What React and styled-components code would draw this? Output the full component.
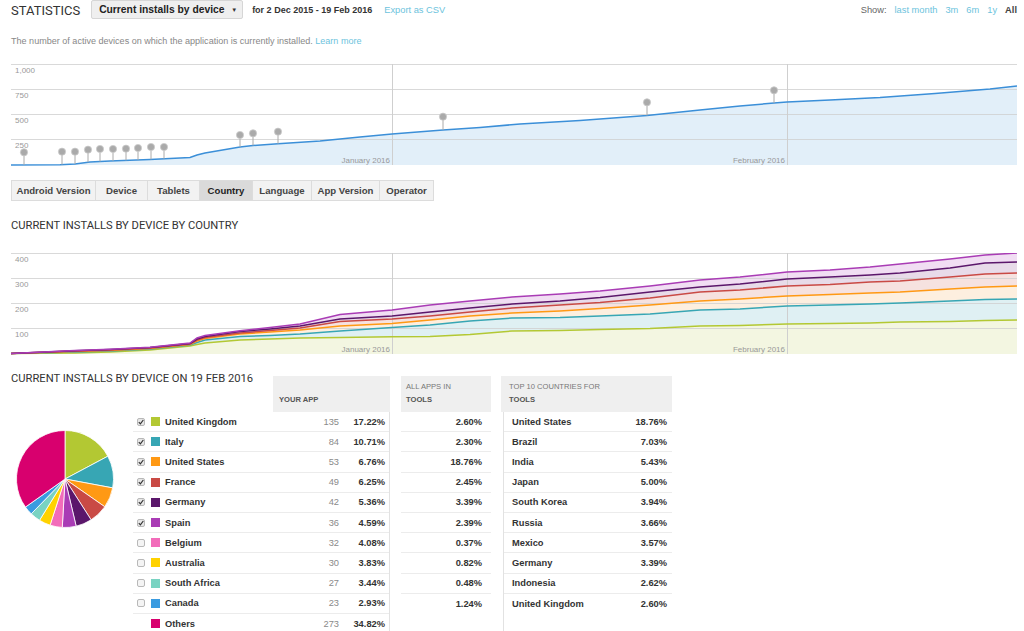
import React from 'react';
import styled, { createGlobalStyle } from 'styled-components';

const GlobalStyle = createGlobalStyle`
  body {
    margin: 0;
    background: #fff;
    font-family: "Liberation Sans", Arial, sans-serif;
    color: #333;
  }
`;

const Page = styled.div`
  width: 1024px;
  height: 631px;
  overflow: hidden;
`;

// Top bar with title, metric picker and range links
const Header = styled.div`
  display: flex;
  align-items: center;
  height: 20px;
  padding: 0 7px 0 11px;
`;

const PageTitle = styled.div`
  font-family: Roboto, sans-serif;
  font-size: 13px;
  color: #333;
  margin-right: 11px;
`;

const Picker = styled.div`
  display: flex;
  align-items: center;
  justify-content: space-between;
  box-sizing: border-box;
  width: 152px;
  height: 19px;
  margin-top: -1px;
  padding: 0 5px 0 7px;
  background: #efefef;
  border: 1px solid #d6d6d6;
  border-radius: 2px;
  font-size: 10.3px;
  font-weight: bold;
  color: #222;
`;

const Caret = styled.span`
  font-size: 6px;
  color: #333;
`;

const Range = styled.div`
  margin-left: 9px;
  font-size: 9px;
  font-weight: bold;
  color: #333;
`;

const Link = styled.a`
  color: #6cc3dd;
  text-decoration: none;
  font-weight: ${p => (p.$active ? 'bold' : 'normal')};
  ${p => p.$active && 'color: #444;'}
`;

const ExportLink = styled(Link)`
  margin-left: 12px;
  font-size: 9.3px;
`;

const ShowGroup = styled.div`
  margin-left: auto;
  display: flex;
  gap: 8px;
  font-size: 9.3px;
  color: #666;
`;

const Description = styled.div`
  margin: 15px 0 0 11px;
  height: 12px;
  line-height: 12px;
  font-size: 9.05px;
  color: #888;
`;

// Chart frame
const ChartBox = styled.div`
  margin: ${p => p.$top}px 7px 0 11px;
  height: 102px;
  svg {
    display: block;
  }
`;

const Tabs = styled.div`
  display: flex;
  margin: 14px 0 0 11px;
`;

const Tab = styled.div`
  width: ${p => p.$w}px;
  height: 21px;
  box-sizing: border-box;
  display: flex;
  align-items: center;
  justify-content: center;
  border: 1px solid #dcdcdc;
  border-left: ${p => (p.$first ? '1px solid #dcdcdc' : 'none')};
  background: ${p => (p.$active ? '#dadada' : '#f2f2f2')};
  font-size: 9.6px;
  font-weight: bold;
  color: ${p => (p.$active ? '#222' : '#444')};
`;

const SectionTitle = styled.div`
  font-family: Roboto, sans-serif;
  font-size: 11.2px;
  color: #333;
  margin: ${p => p.$top}px 0 0 11px;
  line-height: 14px;
`;

// Bottom breakdown grid
const Breakdown = styled.div`
  display: grid;
  grid-template-columns: 122px 140px 117px 11px 90px 10px 171px;
  grid-template-rows: 36px auto;
  margin: 21px 0 0 11px;
`;

const GridTitle = styled.div`
  grid-column: 1 / 3;
  grid-row: 1;
  font-family: Roboto, sans-serif;
  font-size: 11.2px;
  line-height: 14px;
  margin-top: -4px;
  color: #333;
`;

const HeadCell = styled.div`
  grid-column: ${p => p.$col};
  grid-row: 1;
  background: #efefef;
  padding: 4px 0 0 ${p => p.$pad}px;
  font-size: 7.6px;
  line-height: 13px;
  color: #777;
  text-transform: uppercase;
  b {
    color: #555;
  }
`;

const PieCell = styled.div`
  grid-column: 1;
  grid-row: 2;
  padding: 18px 0 0 5px;
`;

const Body = styled.div`
  grid-column: ${p => p.$col};
  grid-row: 2;
  ${p => p.$rule && 'border-right: 1px solid #e2e2e2;'}
  ${p => p.$left && 'margin-left: 2px; border-left: 1px solid #e2e2e2;'}
`;

const Row = styled.div`
  display: flex;
  align-items: center;
  box-sizing: border-box;
  height: 20.2px;
  border-bottom: ${p => (p.$last ? 'none' : '1px solid #ececec')};
  padding: ${p => p.$pad || '0 4px 0 4px'};
  font-size: 9.3px;
  font-weight: bold;
  color: #333;
`;

const Check = styled.span`
  width: 8px;
  height: 8px;
  box-sizing: border-box;
  border: 1px solid #b8b8b8;
  border-radius: 2px;
  background: ${p => (p.$on ? '#e6e6e6' : '#f4f4f4')};
  display: flex;
  align-items: center;
  justify-content: center;
  visibility: ${p => (p.$hidden ? 'hidden' : 'visible')};
`;

const Swatch = styled.span`
  width: 9px;
  height: 9px;
  margin-left: 6px;
  background: ${p => p.$color};
`;

const Name = styled.span`
  flex: 1;
  margin-left: 5px;
`;

const Count = styled.span`
  font-weight: normal;
  color: #8a8a8a;
`;

const Pct = styled.span`
  width: 46px;
  text-align: right;
`;

const Value = styled.span`
  margin-left: auto;
`;

const COUNTRIES = [
  { name: 'United Kingdom', color: '#b3c833', count: 135, pct: 17.22, all: '2.60%', checked: true },
  { name: 'Italy', color: '#37a6b4', count: 84, pct: 10.71, all: '2.30%', checked: true },
  { name: 'United States', color: '#ff9914', count: 53, pct: 6.76, all: '18.76%', checked: true },
  { name: 'France', color: '#c94a45', count: 49, pct: 6.25, all: '2.45%', checked: true },
  { name: 'Germany', color: '#5b176b', count: 42, pct: 5.36, all: '3.39%', checked: true },
  { name: 'Spain', color: '#a93cb5', count: 36, pct: 4.59, all: '2.39%', checked: true },
  { name: 'Belgium', color: '#f26cba', count: 32, pct: 4.08, all: '0.37%' },
  { name: 'Australia', color: '#ffd200', count: 30, pct: 3.83, all: '0.82%' },
  { name: 'South Africa', color: '#79d3c2', count: 27, pct: 3.44, all: '0.48%' },
  { name: 'Canada', color: '#3a9be0', count: 23, pct: 2.93, all: '1.24%' },
  { name: 'Others', color: '#d8006e', count: 273, pct: 34.82, others: true },
];

const TOP10 = [
  ['United States', '18.76%'],
  ['Brazil', '7.03%'],
  ['India', '5.43%'],
  ['Japan', '5.00%'],
  ['South Korea', '3.94%'],
  ['Russia', '3.66%'],
  ['Mexico', '3.57%'],
  ['Germany', '3.39%'],
  ['Indonesia', '2.62%'],
  ['United Kingdom', '2.60%'],
];

const TABS = [
  ['Android Version', 85],
  ['Device', 52],
  ['Tablets', 52],
  ['Country', 53],
  ['Language', 59],
  ['App Version', 68],
  ['Operator', 54],
];

// global x/y -> chart local coordinates
const CX = 11;

const linePath = (xs, ys, top) =>
  xs.map((x, i) => `${i ? 'L' : 'M'}${(x - CX).toFixed(1)},${(ys[i] - top).toFixed(1)}`).join(' ');

const areaPath = (xs, ys, top) =>
  `${linePath(xs, ys, top)} L${xs[xs.length - 1] - CX},101 L${xs[0] - CX},101 Z`;

const interp = (xs, ys, x) => {
  for (let i = 1; i < xs.length; i++) {
    if (x <= xs[i]) {
      const t = (x - xs[i - 1]) / (xs[i] - xs[i - 1]);
      return ys[i - 1] + t * (ys[i] - ys[i - 1]);
    }
  }
  return ys[ys.length - 1];
};

const Grid = ({ labels }) => (
  <g>
    {[0, 25, 50, 75].map((y, i) => (
      <g key={y}>
        <line x1="0" x2="1006" y1={y + 0.5} y2={y + 0.5} stroke="#cfcfcf" strokeOpacity="0.8" />
        <text x="4" y={y + 9} fontSize="8" fill="#999" fontFamily="Liberation Sans, Arial, sans-serif">
          {labels[i]}
        </text>
      </g>
    ))}
    {[[381, 'January 2016'], [776, 'February 2016']].map(([x, t]) => (
      <g key={t}>
        <line x1={x + 0.5} x2={x + 0.5} y1="0" y2="101" stroke="#cfcfcf" />
        <text x={x - 2} y="99" fontSize="8" fill="#999" textAnchor="end" fontFamily="Liberation Sans, Arial, sans-serif">
          {t}
        </text>
      </g>
    ))}
  </g>
);

const XS1 = [11, 60, 75, 90, 110, 150, 190, 197, 205, 240, 253, 278, 320, 360, 392, 443, 480, 520, 580, 620, 647, 700, 740, 774, 787, 830, 880, 935, 990, 1017];
const YS1 = [165, 164.7, 164, 162, 161, 159.5, 157.5, 155, 153, 147, 145.5, 143.8, 141, 137, 134, 130, 127.5, 124, 120.5, 117.5, 115.5, 110, 106, 103, 102, 100, 97.5, 93.5, 89, 86];
const PINS = [[24, 152.3], [62, 151.7], [75, 151.7], [88, 149.7], [100, 149], [113, 149], [126, 148.7], [138, 148], [151, 147], [164, 147], [240, 135], [253, 133.3], [278, 131.7], [443, 116.7], [647, 102.3], [774, 90.3]];

const InstallsChart = () => {
  const top = 64;
  return (
    <svg width="1006" height="102" viewBox="0 0 1006 102">
      <path d={areaPath(XS1, YS1, top)} fill="#e2eff9" />
      <Grid labels={['1,000', '750', '500', '250']} />
      <path d={linePath(XS1, YS1, top)} fill="none" stroke="#3b8fd8" strokeWidth="1.5" />
      {PINS.map(([x, y]) => (
        <g key={x}>
          <line x1={x - CX} x2={x - CX} y1={y - top + 3} y2={interp(XS1, YS1, x) - top} stroke="#aaa" />
          <circle cx={x - CX} cy={y - top} r="3.6" fill="#aaa" stroke="#ccc" strokeWidth="0.8" />
        </g>
      ))}
    </svg>
  );
};

const XS2 = [11, 75, 110, 150, 190, 197, 205, 240, 270, 300, 340, 392, 430, 470, 512, 560, 600, 650, 700, 740, 787, 830, 870, 900, 950, 985, 1017];
const SERIES = [
  { color: '#a93cb5', fill: '#f1def3', ys: [354.5, 351.5, 350.2, 348.2, 344, 339, 336.5, 331.7, 328.5, 325, 315.5, 311, 306, 302, 298, 295, 292, 287, 281, 278, 273, 271, 268, 265, 260, 256, 254] },
  { color: '#5b176b', fill: '#e8dbe9', ys: [354.5, 351.8, 350.6, 348.6, 344.5, 340, 337.5, 332.5, 330, 327, 320, 317, 313, 309, 305, 302, 298.5, 293, 288, 285, 280, 278, 276, 274, 269, 264, 263] },
  { color: '#c94a45', fill: '#f6e2e0', ys: [354.5, 352, 351, 349, 345, 341, 338.5, 334, 331.5, 329, 322.5, 320, 317, 313, 309, 306, 303.5, 299, 293, 291, 287, 285.5, 283, 282, 278, 275, 274] },
  { color: '#ff9914', fill: '#fdefdf', ys: [354.5, 352.5, 351.5, 349.5, 345.5, 342, 339.5, 335, 333, 331, 327, 324.5, 321, 317, 314, 312, 309.5, 306, 302, 300, 297, 295.5, 294, 293, 290, 288, 287] },
  { color: '#37a6b4', fill: '#dff0f3', ys: [354.5, 353, 352, 350, 346, 343.5, 341, 337.5, 336.5, 335, 332, 328.5, 326, 322, 319, 318.5, 317, 315, 311, 310, 307, 306, 305, 304, 302, 300.5, 300] },
  { color: '#b3c833', fill: '#f3f6e1', ys: [354.5, 354, 353, 351, 347, 345.5, 344, 341, 340, 339, 338.5, 337.7, 337.5, 335.5, 332, 331.5, 330.5, 329.5, 327, 326.5, 325, 324.5, 324, 323, 322.5, 321.5, 321] },
];

const CountryChart = () => {
  const top = 254;
  return (
    <svg width="1006" height="102" viewBox="0 0 1006 102">
      {SERIES.map(s => (
        <path key={s.color} d={areaPath(XS2, s.ys, top)} fill={s.fill} />
      ))}
      <Grid labels={['400', '300', '200', '100']} />
      {[...SERIES].reverse().map(s => (
        <path key={s.color} d={linePath(XS2, s.ys, top)} fill="none" stroke={s.color} strokeWidth="1.5" />
      ))}
    </svg>
  );
};

const Pie = () => {
  const r = 48.5;
  const c = 49;
  let angle = -Math.PI / 2;
  const total = COUNTRIES.reduce((a, s) => a + s.pct, 0);
  return (
    <svg width="98" height="98" viewBox="0 0 98 98">
      {COUNTRIES.map(s => {
        const a0 = angle;
        const a1 = angle + (s.pct / total) * Math.PI * 2;
        angle = a1;
        const large = a1 - a0 > Math.PI ? 1 : 0;
        const d = `M${c},${c} L${c + r * Math.cos(a0)},${c + r * Math.sin(a0)} A${r},${r} 0 ${large} 1 ${c + r * Math.cos(a1)},${c + r * Math.sin(a1)} Z`;
        return <path key={s.name} d={d} fill={s.color} stroke="#fff" strokeWidth="0.8" />;
      })}
    </svg>
  );
};

const Tick = () => (
  <svg width="6" height="6" viewBox="0 0 6 6">
    <path d="M0.8,3.2 L2.4,4.8 L5.3,1" fill="none" stroke="#333" strokeWidth="1.2" />
  </svg>
);

const App = () => (
  <Page>
    <GlobalStyle />
    <Header>
      <PageTitle>STATISTICS</PageTitle>
      <Picker>
        Current installs by device
        <Caret>▼</Caret>
      </Picker>
      <Range>for 2 Dec 2015 - 19 Feb 2016</Range>
      <ExportLink href="#">Export as CSV</ExportLink>
      <ShowGroup>
        <span>Show:</span>
        <Link href="#">last month</Link>
        <Link href="#">3m</Link>
        <Link href="#">6m</Link>
        <Link href="#">1y</Link>
        <Link href="#" $active>All</Link>
      </ShowGroup>
    </Header>
    <Description>
      The number of active devices on which the application is currently installed. <Link href="#">Learn more</Link>
    </Description>

    <ChartBox $top={17}>
      <InstallsChart />
    </ChartBox>

    <Tabs>
      {TABS.map(([t, w], i) => (
        <Tab key={t} $w={w} $first={i === 0} $active={t === 'Country'}>{t}</Tab>
      ))}
    </Tabs>

    <SectionTitle $top={18}>CURRENT INSTALLS BY DEVICE BY COUNTRY</SectionTitle>

    <ChartBox $top={20}>
      <CountryChart />
    </ChartBox>

    <Breakdown>
      <GridTitle>CURRENT INSTALLS BY DEVICE ON 19 FEB 2016</GridTitle>
      <HeadCell $col={3} $pad={6}>
        <br />
        <b>Your app</b>
      </HeadCell>
      <HeadCell $col={5} $pad={5}>
        All apps in
        <br />
        <b>Tools</b>
      </HeadCell>
      <HeadCell $col={7} $pad={8}>
        Top 10 countries for
        <br />
        <b>Tools</b>
      </HeadCell>

      <PieCell>
        <Pie />
      </PieCell>

      <Body $col="2 / 4" $rule>
        {COUNTRIES.map((s, i) => (
          <Row key={s.name} $last={i === COUNTRIES.length - 1}>
            <Check $on={s.checked} $hidden={s.others}>{s.checked && <Tick />}</Check>
            <Swatch $color={s.color} />
            <Name>{s.name}</Name>
            <Count>{s.count}</Count>
            <Pct>{s.pct.toFixed(2)}%</Pct>
          </Row>
        ))}
      </Body>

      <Body $col={5}>
        {COUNTRIES.filter(s => !s.others).map((s, i) => (
          <Row key={s.name} $pad="0 9px 0 0" $last={i === 9}>
            <Value>{s.all}</Value>
          </Row>
        ))}
      </Body>

      <Body $col={7} $left>
        {TOP10.map(([n, v], i) => (
          <Row key={n} $pad="0 5px 0 8px" $last={i === 9}>
            <span>{n}</span>
            <Value>{v}</Value>
          </Row>
        ))}
      </Body>
    </Breakdown>
  </Page>
);

export default App;
